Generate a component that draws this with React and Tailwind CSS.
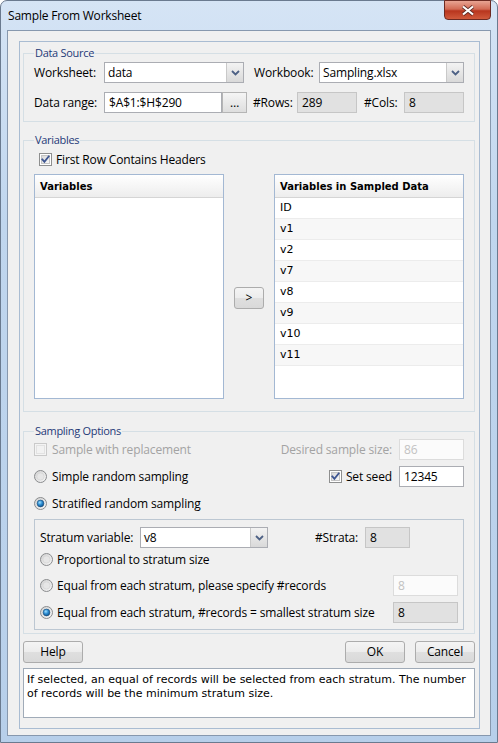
import React from "react";

function CheckBox({ checked, disabled }) {
  return (
    <svg width="13" height="13" viewBox="0 0 13 13" className="shrink-0">
      <defs>
        <linearGradient id="cbfill" x1="0" y1="0" x2="1" y2="1">
          <stop offset="0" stopColor="#d6d6d6" />
          <stop offset="1" stopColor="#fafafa" />
        </linearGradient>
      </defs>
      <rect x="0.5" y="0.5" width="12" height="12" fill={disabled ? "#f4f4f4" : "#ffffff"} stroke={disabled ? "#cacaca" : "#8e8f8f"} />
      <rect x="2.5" y="2.5" width="8" height="8" fill={disabled ? "#f2f2f2" : "url(#cbfill)"} stroke={disabled ? "#e2e2e2" : "#c4c4c4"} />
      {checked && (
        <path d="M3.3 6.4 L5.4 8.9 L9.7 3.4" stroke="#3d5591" strokeWidth="1.8" fill="none" strokeLinecap="square" />
      )}
    </svg>
  );
}

function Radio({ checked }) {
  return (
    <svg width="13" height="13" viewBox="0 0 13 13" className="shrink-0">
      <defs>
        <linearGradient id="rdring" x1="0" y1="0" x2="1" y2="1">
          <stop offset="0" stopColor="#d0d0d0" />
          <stop offset="1" stopColor="#f8f8f8" />
        </linearGradient>
        <radialGradient id="rddot" cx="0.4" cy="0.35" r="0.7">
          <stop offset="0" stopColor="#9fe0ff" />
          <stop offset="0.5" stopColor="#2a8ad0" />
          <stop offset="1" stopColor="#0d4f86" />
        </radialGradient>
      </defs>
      <circle cx="6.5" cy="6.5" r="6" fill="url(#rdring)" stroke="#8a8c8e" />
      {checked ? (
        <circle cx="6.5" cy="6.5" r="3.4" fill="url(#rddot)" stroke="#1d4c77" strokeWidth="0.6" />
      ) : (
        <circle cx="6.5" cy="6.5" r="3.6" fill="#e6e6e6" stroke="#d2d2d2" strokeWidth="0.6" />
      )}
    </svg>
  );
}

function Chevron() {
  return (
    <svg width="9" height="6" viewBox="0 0 9 6">
      <path d="M1 1 L4.5 4.5 L8 1" stroke="#4d6185" strokeWidth="1.8" fill="none" />
    </svg>
  );
}

function Combo({ value, w }) {
  return (
    <div className={`flex h-[21px] border border-[#abadb3] bg-white ${w}`}>
      <div className="flex-1 pl-[3px] flex items-center">{value}</div>
      <div className="w-[17px] flex items-center justify-center border-l border-[#c9c9c9] bg-[linear-gradient(#f3f3f3,#d9d9d9)]">
        <Chevron />
      </div>
    </div>
  );
}

function Field({ value, w, kind }) {
  const look =
    kind === "gray"
      ? "bg-[#e1e1e1] border-[#c6c6c6] text-black"
      : kind === "disabled"
      ? "bg-[#fbfbfb] border-[#dcdcdc] text-[#c2c2c2]"
      : "bg-white border-[#abadb3] text-black";
  return <div className={`h-[21px] border pl-[4px] flex items-center ${look} ${w}`}>{value}</div>;
}

function Btn({ children, w }) {
  return (
    <div className={`h-[22px] rounded-[3px] border border-[#acacac] bg-[linear-gradient(#f4f4f4_0%,#ececec_50%,#dfdfdf_51%,#d9d9d9_100%)] flex items-center justify-center ${w}`}>
      {children}
    </div>
  );
}

function Legend({ children }) {
  return <legend className="px-[1px] leading-[16px] text-[11px] tracking-[-0.3px] text-[#1e3a78]">{children}</legend>;
}

const rows = ["ID", "v1", "v2", "v7", "v8", "v9", "v10", "v11"];

export default function App() {
  return (
    <div className="w-[498px] h-[743px] overflow-hidden bg-white font-['Open_Sans','Noto_Sans',sans-serif] text-[12px] tracking-[-0.15px] text-black">
      <div className="relative w-[498px] h-[743px] rounded-t-[7px] border border-[#6a7a8f] bg-[linear-gradient(180deg,#d5e4f5_0%,#c0d6ee_30%,#b7cfea_100%)]">
        {/* title bar */}
        <div className="h-[29px] flex items-center pl-[7px] tracking-[-0.2px]">Sample From Worksheet</div>
        <div className="absolute top-[-1px] right-[6px] w-[47px] h-[20px] rounded-b-[4px] border border-[#6c2a22] bg-[linear-gradient(180deg,#e8a493_0%,#d26b55_45%,#b8351e_55%,#d05a3c_100%)] flex items-center justify-center">
          <svg width="14" height="11" viewBox="0 0 14 11">
            <path d="M2 1.5 L12 9.5 M12 1.5 L2 9.5" stroke="#5a2a24" strokeWidth="3.6" />
            <path d="M2 1.5 L12 9.5 M12 1.5 L2 9.5" stroke="#ffffff" strokeWidth="2.2" />
          </svg>
        </div>

        {/* client area */}
        <div className="ml-[6px] w-[484px] h-[706px] border border-[#8798ae] bg-[#f0f0f0] pt-[10px] pl-[11px]">
          <div className="w-[461px] h-[688px] border border-[#a9bcd2] pl-[3px] pt-[3px]">
            {/* Data Source */}
            <fieldset className="w-[452px] border border-[#d5dfe5] pl-[10px] pr-[10px] pb-[8px]">
              <Legend>Data Source</Legend>
              <div className="mt-[1px] flex items-center h-[21px]">
                <span className="w-[70px]">Worksheet:</span>
                <Combo value="data" w="w-[140px]" />
                <span className="ml-[10px] w-[65px]">Workbook:</span>
                <Combo value="Sampling.xlsx" w="w-[145px]" />
              </div>
              <div className="mt-[9px] flex items-center h-[21px]">
                <span className="w-[70px]">Data range:</span>
                <Field value="$A$1:$H$290" w="w-[118px]" />
                <div className="w-[25px] h-[21px] border border-[#b5b5b5] bg-[linear-gradient(#f5f5f5,#dedede)] flex items-center justify-center leading-none">…</div>
                <span className="ml-[6px] w-[44px]">#Rows:</span>
                <Field value="289" w="w-[60px]" kind="gray" />
                <span className="ml-[7px] w-[40px]">#Cols:</span>
                <Field value="8" w="w-[60px]" kind="gray" />
              </div>
            </fieldset>

            {/* Variables */}
            <fieldset className="mt-[10px] w-[452px] border border-[#d5dfe5] pl-[10px] pr-[10px] pb-[12px]">
              <Legend>Variables</Legend>
              <div className="mt-[3px] h-[17px] pl-[5px] flex items-center gap-[4px]">
                <CheckBox checked />
                <span>First Row Contains Headers</span>
              </div>
              <div className="mt-[6px] flex h-[225px] font-['DejaVu_Sans',sans-serif] text-[11px] tracking-normal">
                <div className="w-[190px] border border-[#a3b8d3] bg-white">
                  <div className="h-[23px] border-b border-[#d5d5d5] bg-[linear-gradient(#ffffff,#ededed)] flex items-center pl-[5px] font-bold text-[10px]">
                    Variables
                  </div>
                </div>
                <div className="w-[50px] flex justify-center">
                  <Btn w="w-[30px] mt-[113px] font-['Open_Sans',sans-serif] text-[12px]">&gt;</Btn>
                </div>
                <div className="w-[190px] border border-[#a3b8d3] bg-white">
                  <div className="h-[23px] border-b border-[#d5d5d5] bg-[linear-gradient(#ffffff,#ededed)] flex items-center pl-[5px] font-bold text-[10px]">
                    Variables in Sampled Data
                  </div>
                  {rows.map((r, i) => (
                    <div
                      key={r}
                      className={`h-[21px] border-b border-[#ececec] flex items-center pl-[5px] ${i % 2 ? "bg-[#f7f7f7]" : "bg-white"}`}
                    >
                      {r}
                    </div>
                  ))}
                </div>
              </div>
            </fieldset>

            {/* Sampling Options */}
            <fieldset className="mt-[11px] w-[452px] border border-[#d5dfe5] pl-[10px] pr-[10px] pb-[3px]">
              <Legend>Sampling Options</Legend>
              <div className="h-[21px] flex items-center">
                <CheckBox disabled />
                <span className="ml-[5px] text-[#a3a3a3]">Sample with replacement</span>
                <span className="ml-auto mr-[7px] text-[#a3a3a3]">Desired sample size:</span>
                <Field value="86" w="w-[65px]" kind="disabled" />
              </div>
              <div className="mt-[6px] h-[21px] flex items-center">
                <Radio />
                <span className="ml-[5px]">Simple random sampling</span>
                <span className="ml-auto">
                  <CheckBox checked />
                </span>
                <span className="ml-[4px] mr-[7px]">Set seed</span>
                <Field value="12345" w="w-[65px]" />
              </div>
              <div className="mt-[6px] h-[21px] flex items-center">
                <Radio checked />
                <span className="ml-[5px]">Stratified random sampling</span>
              </div>
              <div className="mt-[5px] w-[430px] border border-[#bcc7d2] pl-[5px] pr-[5px] pt-[7px] pb-[6px]">
                <div className="h-[21px] flex items-center">
                  <span className="w-[100px]">Stratum variable:</span>
                  <Combo value="v8" w="w-[128px]" />
                  <span className="ml-[47px] w-[50px]">#Strata:</span>
                  <Field value="8" w="w-[45px]" kind="gray" />
                </div>
                <div className="mt-[1px] h-[21px] flex items-center">
                  <Radio />
                  <span className="ml-[4px]">Proportional to stratum size</span>
                </div>
                <div className="mt-[5px] h-[21px] flex items-center">
                  <Radio />
                  <span className="ml-[4px]">Equal from each stratum, please specify #records</span>
                  <span className="ml-auto">
                    <Field value="8" w="w-[65px]" kind="disabled" />
                  </span>
                </div>
                <div className="mt-[6px] h-[21px] flex items-center">
                  <Radio checked />
                  <span className="ml-[4px]">Equal from each stratum, #records = smallest stratum size</span>
                  <span className="ml-auto">
                    <Field value="8" w="w-[65px]" kind="gray" />
                  </span>
                </div>
              </div>
            </fieldset>

            {/* buttons */}
            <div className="mt-[7px] w-[452px] flex">
              <Btn w="w-[60px]">Help</Btn>
              <Btn w="w-[60px] ml-auto">OK</Btn>
              <Btn w="w-[60px] ml-[10px]">Cancel</Btn>
            </div>

            {/* description */}
            <div className="mt-[5px] w-[452px] h-[50px] border border-[#a0abb8] bg-white pl-[3px] pr-[2px] pt-[4px] font-['DejaVu_Sans',sans-serif] text-[11px] leading-[14px] tracking-normal">
              If selected, an equal of records will be selected from each stratum. The number of records will be the minimum stratum size.
            </div>
          </div>
        </div>
      </div>
    </div>
  );
}
